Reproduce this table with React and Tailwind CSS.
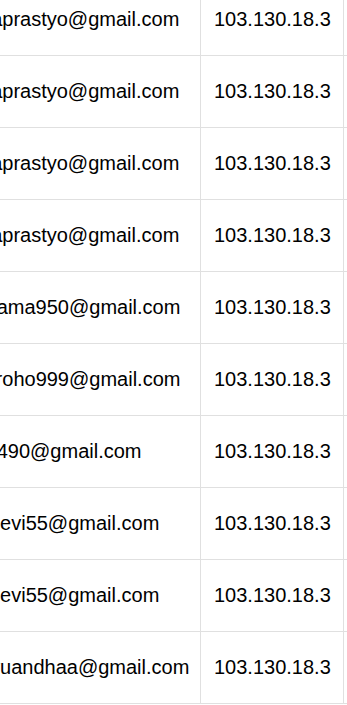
const rows = [
  { email: 'hendraprastyo@gmail.com', ip: '103.130.18.3' },
  { email: 'hendraprastyo@gmail.com', ip: '103.130.18.3' },
  { email: 'hendraprastyo@gmail.com', ip: '103.130.18.3' },
  { email: 'hendraprastyo@gmail.com', ip: '103.130.18.3' },
  { email: 'riopratama950@gmail.com', ip: '103.130.18.3' },
  { email: 'arinugroho999@gmail.com', ip: '103.130.18.3' },
  { email: 'rahma490@gmail.com', ip: '103.130.18.3' },
  { email: 'dianadevi55@gmail.com', ip: '103.130.18.3' },
  { email: 'dianadevi55@gmail.com', ip: '103.130.18.3' },
  { email: 'putriayuandhaa@gmail.com', ip: '103.130.18.3' },
];

export default function App() {
  return (
    <div className="h-[705px] w-[347px] overflow-hidden bg-white font-['Liberation_Sans',Arial,sans-serif] text-[20px] text-black">
      <div className="-ml-[73px] -mt-[16px] w-[570px]">
        {rows.map((row, i) => (
          <div
            key={i}
            className="grid h-[72px] grid-cols-[274px_143px_153px] border-b border-[#e0e0e0]"
          >
            <div className="flex items-center whitespace-nowrap border-r border-[#e0e0e0] px-[13px] pb-[1px]">
              {row.email}
            </div>
            <div className="flex items-center whitespace-nowrap border-r border-[#e0e0e0] px-[13px] pb-[1px]">
              {row.ip}
            </div>
            <div className="flex items-center px-[13px]" />
          </div>
        ))}
      </div>
    </div>
  );
}
